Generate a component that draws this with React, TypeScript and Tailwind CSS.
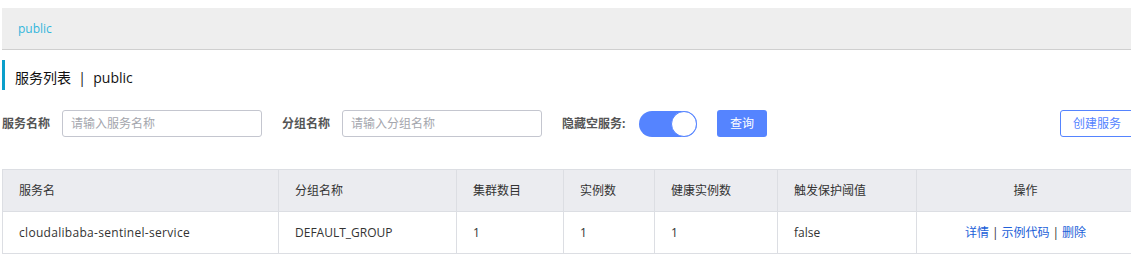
import React from "react";

const font = { fontFamily: '"Open Sans", "Noto Sans CJK SC", sans-serif' };

const cols = [276, 178, 107, 91, 123, 139, 218];

export default function App() {
  return (
    <div className="w-[1131px] h-[270px] overflow-hidden bg-white text-[#333]" style={font}>
      <div className="w-[1132px] ml-[2px]">
        {/* breadcrumb bar */}
        <div className="mt-[8px] h-[42px] bg-[#eeeeee] border-b border-[#cfcfcf] flex items-center pl-[16px]">
          <span className="text-[12px] text-[#33b6dc]">public</span>
        </div>

        {/* title */}
        <div className="mt-[10px] h-[30px] border-l-[3px] border-[#0a9fcb] flex items-center pl-[10px] pt-[5px]">
          <span className="text-[14px] text-[#111]">服务列表&nbsp;&nbsp;|&nbsp;&nbsp;public</span>
        </div>

        {/* search row */}
        <div className="mt-[20px] h-[27px] flex items-center">
          <span className="text-[12px] font-bold text-[#555] w-[60px]">服务名称</span>
          <div className="w-[200px] h-[27px] border border-[#c4c6cf] rounded-[3px] flex items-center px-[8px]">
            <span className="text-[12px] text-[#a4a6ad]">请输入服务名称</span>
          </div>
          <span className="ml-[20px] text-[12px] font-bold text-[#555] w-[60px]">分组名称</span>
          <div className="w-[200px] h-[27px] border border-[#c4c6cf] rounded-[3px] flex items-center px-[8px]">
            <span className="text-[12px] text-[#a4a6ad]">请输入分组名称</span>
          </div>
          <span className="ml-[20px] text-[12px] font-bold text-[#555] w-[77px]">隐藏空服务:</span>
          <div className="w-[58px] h-[26px] rounded-full bg-[#5584ff] flex items-center justify-end">
            <div className="w-[26px] h-[26px] rounded-full bg-white border border-[#5584ff]" />
          </div>
          <div className="ml-[20px] w-[50px] h-[27px] rounded-[3px] bg-[#5584ff] flex items-center justify-center">
            <span className="text-[12px] text-white">查询</span>
          </div>
          <div className="ml-auto w-[74px] h-[27px] rounded-[3px] border border-[#5584ff] flex items-center justify-center">
            <span className="text-[12px] text-[#5584ff]">创建服务</span>
          </div>
        </div>

        {/* table */}
        <table className="mt-[32px] table-fixed border-collapse text-[12px] w-[1132px]">
          <colgroup>
            {cols.map((w, i) => (
              <col key={i} style={{ width: w }} />
            ))}
          </colgroup>
          <thead>
            <tr className="bg-[#ebecf0] h-[42px]">
              <th className="border border-[#dcdee3] text-left font-normal pl-[16px]">服务名</th>
              <th className="border border-[#dcdee3] text-left font-normal pl-[16px]">分组名称</th>
              <th className="border border-[#dcdee3] text-left font-normal pl-[16px]">集群数目</th>
              <th className="border border-[#dcdee3] text-left font-normal pl-[16px]">实例数</th>
              <th className="border border-[#dcdee3] text-left font-normal pl-[16px]">健康实例数</th>
              <th className="border border-[#dcdee3] text-left font-normal pl-[16px]">触发保护阈值</th>
              <th className="border border-[#dcdee3] text-center font-normal">操作</th>
            </tr>
          </thead>
          <tbody>
            <tr className="h-[42px]">
              <td className="border border-[#dcdee3] pl-[16px] tracking-[0.3px]">cloudalibaba-sentinel-service</td>
              <td className="border border-[#dcdee3] pl-[16px]">DEFAULT_GROUP</td>
              <td className="border border-[#dcdee3] pl-[16px]">1</td>
              <td className="border border-[#dcdee3] pl-[16px]">1</td>
              <td className="border border-[#dcdee3] pl-[16px]">1</td>
              <td className="border border-[#dcdee3] pl-[16px]">false</td>
              <td className="border border-[#dcdee3] text-center">
                <span className="text-[#2160d8]">详情</span>
                <span className="mx-[3px] text-[#333]">|</span>
                <span className="text-[#2160d8]">示例代码</span>
                <span className="mx-[3px] text-[#333]">|</span>
                <span className="text-[#2160d8]">删除</span>
              </td>
            </tr>
          </tbody>
        </table>
      </div>
    </div>
  );
}
